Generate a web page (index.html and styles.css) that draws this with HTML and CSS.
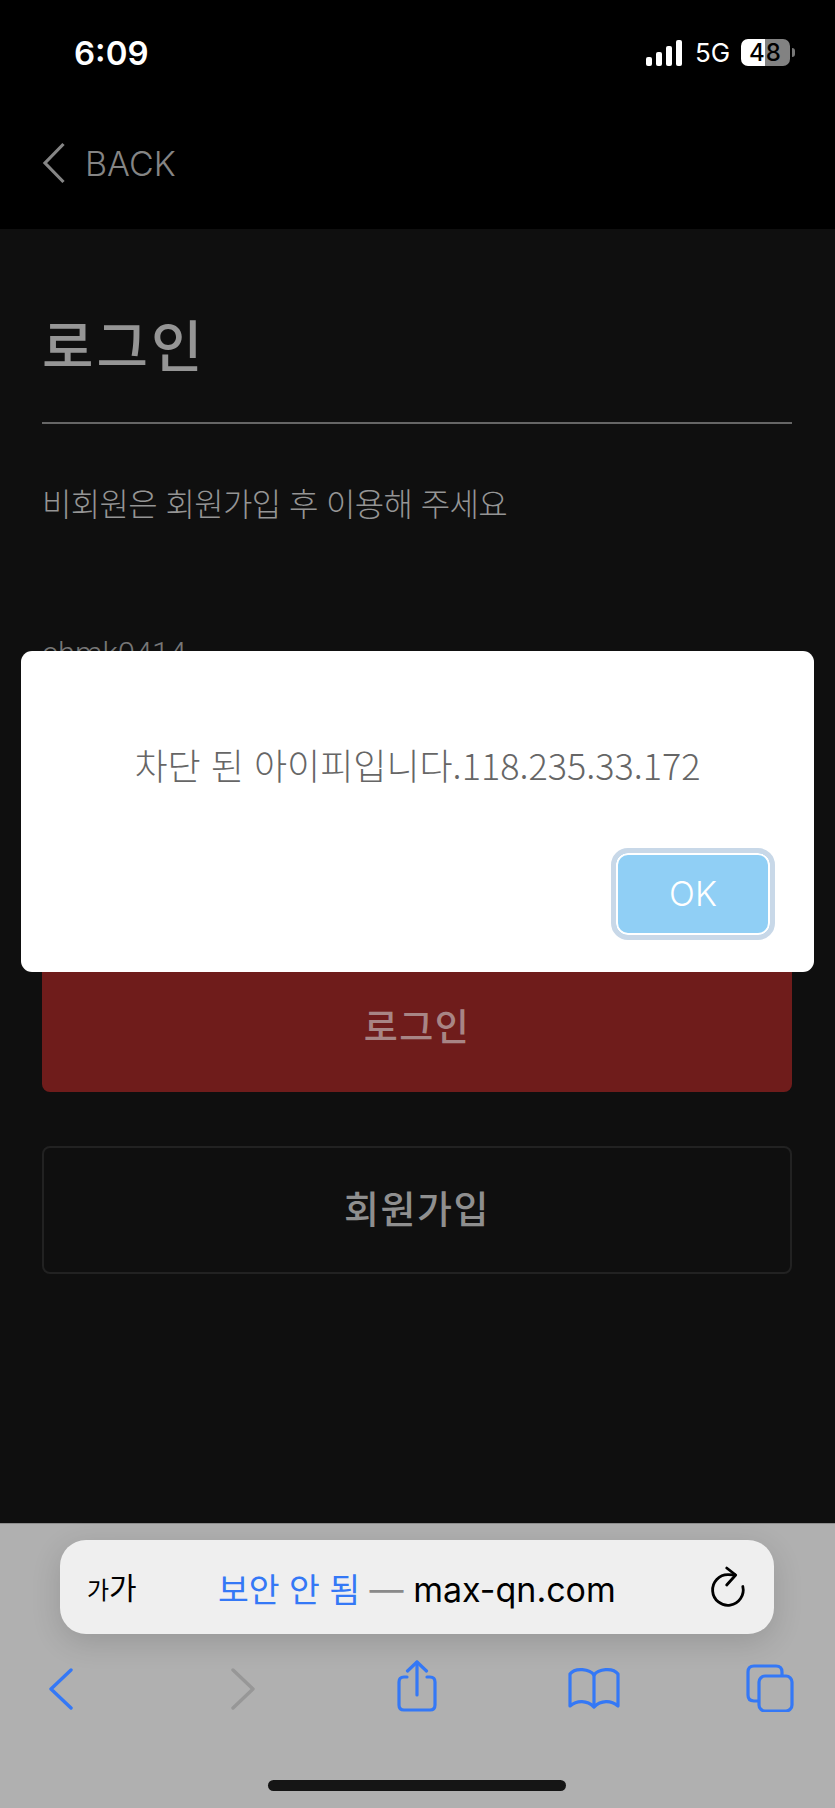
FILE: index.html
```html
<!DOCTYPE html>
<html lang="ko">
<head>
<meta charset="utf-8">
<title>로그인</title>
<link rel="stylesheet" href="styles.css">
</head>
<body>
<div class="page">
  <header class="top">
    <div class="status">
      <span class="time">6:09</span>
      <div class="status-right">
        <svg class="signal" width="36" height="26" viewBox="0 0 36 26"><rect x="0" y="17" width="6" height="9" rx="2"/><rect x="10" y="12" width="6" height="14" rx="2"/><rect x="20" y="6" width="6" height="20" rx="2"/><rect x="30" y="0" width="6" height="26" rx="2"/></svg>
        <span class="net">5G</span>
        <div class="battery"><span class="batt-num">48</span></div>
        <span class="batt-tip"></span>
      </div>
    </div>
    <div class="back">
      <svg width="24" height="42" viewBox="0 0 24 42" class="back-icon"><path d="M21.5 2 L3 21 L21.5 40" fill="none" stroke="#858585" stroke-width="3.2"/></svg>
      <span>BACK</span>
    </div>
  </header>

  <main class="content">
    <h1 class="title">로그인</h1>
    <p class="note">비회원은 회원가입 후 이용해 주세요</p>
    <div class="field">chmk0414</div>
    <button class="btn btn-login">로그인</button>
    <button class="btn btn-join">회원가입</button>
  </main>

  <footer class="toolbar">
    <div class="url-bar">
      <span class="aa"><small>가</small>가</span>
      <span class="url"><em>보안 안 됨</em> <i>—</i> max-qn.com</span>
      <svg class="reload" width="34" height="40" viewBox="0 0 34 40" fill="none" stroke="#000" stroke-width="2.8" stroke-linecap="round" stroke-linejoin="round"><path d="M25 8 C23 7.9 20 7.7 18 7.7 A15.3 15.3 0 1 0 32.8 19.5"/><path d="M16.7 1 L25.7 8 L16.7 18"/></svg>
    </div>
    <nav class="nav">
      <svg class="ic-back" width="24" height="42" viewBox="0 0 24 42" fill="none" stroke="#3478f6" stroke-width="3.4" stroke-linecap="round" stroke-linejoin="round"><path d="M22 2 L2 21 L22 40"/></svg>
      <svg class="ic-fwd" width="24" height="42" viewBox="0 0 24 42" fill="none" stroke="#979797" stroke-width="3.4" stroke-linecap="round" stroke-linejoin="round"><path d="M2 2 L22 21 L2 40"/></svg>
      <svg class="ic-share" width="40" height="52" viewBox="0 0 40 52" fill="none" stroke="#3478f6" stroke-width="3.2" stroke-linecap="round" stroke-linejoin="round"><path d="M10 17 H7 Q2 17 2 22 V45 Q2 50 7 50 H33 Q38 50 38 45 V22 Q38 17 33 17 H30"/><path d="M20 35 V2"/><path d="M10.5 11 L20 2 L29.5 11"/></svg>
      <svg class="ic-book" width="52" height="42" viewBox="0 0 52 42" fill="none" stroke="#3478f6" stroke-width="3.2" stroke-linecap="round" stroke-linejoin="round"><path d="M26 8 V39"/><path d="M26 8 C22 2 7 0 2 7 V39 C9 33 19 33 26 40 C33 33 43 33 50 39 V7 C45 0 30 2 26 8 Z"/></svg>
      <svg class="ic-tabs" width="48" height="48" viewBox="0 0 48 48" fill="none" stroke="#3478f6" stroke-width="3.2" stroke-linejoin="round"><path d="M12 37 H8 Q2 37 2 31 V8 Q2 2 8 2 H30 Q36 2 36 8 V12"/><rect x="13" y="12" width="33" height="35" rx="6"/></svg>
    </nav>
    <div class="home-bar"></div>
  </footer>

  <div class="dialog">
    <p class="dialog-text">차단 된 아이피입니다.118.235.33.172</p>
    <div class="dialog-actions"><button class="ok">OK</button></div>
  </div>
</div>
</body>
</html>
```
FILE: styles.css
```css
* { box-sizing: border-box; }
html, body { margin: 0; padding: 0; background: #000; }
body { font-family: "Noto Sans CJK KR", "Noto Sans", sans-serif; }
.page { position: relative; width: 835px; height: 1808px; display: flex; flex-direction: column; overflow: hidden; }

.top { height: 229px; background: #000; padding: 0 40px 0 42px; flex: none; }
.status { height: 108px; display: flex; justify-content: space-between; align-items: flex-start; padding-top: 34px; }
.time { font-family: Inter, sans-serif; font-weight: 600; font-size: 33px; line-height: 38px; color: #fff; margin-left: 32px; }
.status-right { display: flex; align-items: center; margin-top: 5px; height: 27px; }
.signal { fill: #fff; margin-right: 13px; }
.net { font-family: Inter, sans-serif; font-size: 26px; color: #fff; width: 46px; }
.battery { width: 49px; height: 27px; border-radius: 7px; background: linear-gradient(90deg, #fff 0 24px, #828282 24px); display: flex; align-items: center; justify-content: center; }
.batt-num { font-family: Inter, sans-serif; font-weight: 500; font-size: 24px; color: #000; letter-spacing: 1px; }
.batt-tip { width: 3px; height: 9px; margin-left: 2px; background: #777; border-radius: 0 3px 3px 0; }
.back { display: flex; align-items: center; gap: 19px; height: 44px; margin-top: 33px; color: #858585; font-family: Inter, sans-serif; font-weight: 300; font-size: 34px; }

.content { flex: 1; background: #0f0f0f; padding: 0 43px 0 42px; display: flex; flex-direction: column; align-items: stretch; }
.title { margin: 0; padding: 74px 0 38px; border-bottom: 2px solid #666; height: 195px; font-size: 56px; line-height: 80px; font-weight: 500; letter-spacing: 3px; color: #959595; }
.note { margin: 55px 0 0; font-size: 32px; line-height: 46px; font-weight: 300; letter-spacing: -0.65px; color: #959595; }
.field { margin-top: 106px; font-size: 31px; line-height: 46px; font-weight: 300; color: #777; font-family: Roboto, sans-serif; }
.btn { display: block; width: 100%; border-radius: 8px; font-family: inherit; }
.btn-login { margin-top: 283px; height: 132px; padding: 0 0 2px; background: #6f1c1b; border: 0; color: #a88585; font-size: 37px; letter-spacing: 1.5px; font-weight: 500; }
.btn-join { margin-top: 54px; height: 128px; padding: 0 0 8px; background: transparent; border: 2px solid #222; color: #8f8f8f; font-size: 38px; letter-spacing: 1.5px; font-weight: 500; }

.toolbar { flex: none; height: 285px; background: #b0b0b0; border-top: 1px solid #8d8d8d; padding-top: 16px; position: relative; }
.url-bar { margin-left: 60px; width: 714px; height: 94px; border-radius: 26px; background: #efefef; box-shadow: 0 8px 30px rgba(0,0,0,.14); display: flex; align-items: center; padding: 0 30px 0 27px; }
.aa { font-size: 30px; line-height: 40px; color: #000; width: 131px; flex: none; }
.aa small { font-size: 24px; }
.url { font-family: Inter, "Noto Sans CJK KR", sans-serif; font-size: 34px; color: #000; white-space: nowrap; flex: 1; }
.url em { font-family: "Noto Sans CJK KR", sans-serif; font-size: 33.5px; font-style: normal; color: #3478f6; }
.url i { font-style: normal; color: #8a8a8a; }
.reload { flex: none; overflow: visible; }
.nav { display: flex; align-items: flex-start; height: 60px; margin-top: 26px; padding-left: 49px; }
.ic-back { margin-top: 8px; }
.ic-fwd { margin-top: 8px; margin-left: 158px; }
.ic-share { margin-left: 142px; }
.ic-book { margin-top: 7px; margin-left: 131px; }
.ic-tabs { margin-top: 4px; margin-left: 126px; }
.home-bar { position: absolute; left: 268px; top: 256px; width: 298px; height: 11px; border-radius: 6px; background: #151515; }

.dialog { position: absolute; left: 21px; top: 651px; width: 793px; height: 321px; background: #fff; border-radius: 11px; padding: 0 39px; }
.dialog-text { margin: 90px 0 0; text-align: center; font-size: 36px; line-height: 46px; font-weight: 300; color: #666; white-space: nowrap; }
.dialog-actions { display: flex; justify-content: flex-end; margin-top: 61px; }
.ok { width: 164px; height: 92px; border-radius: 17px; border: 5px solid #c8d8e8; background: #90cff5; box-shadow: inset 0 0 0 2px #fff; color: #fff; font-family: Inter, sans-serif; font-weight: 300; font-size: 34px; padding: 0 0 2px; }
```
